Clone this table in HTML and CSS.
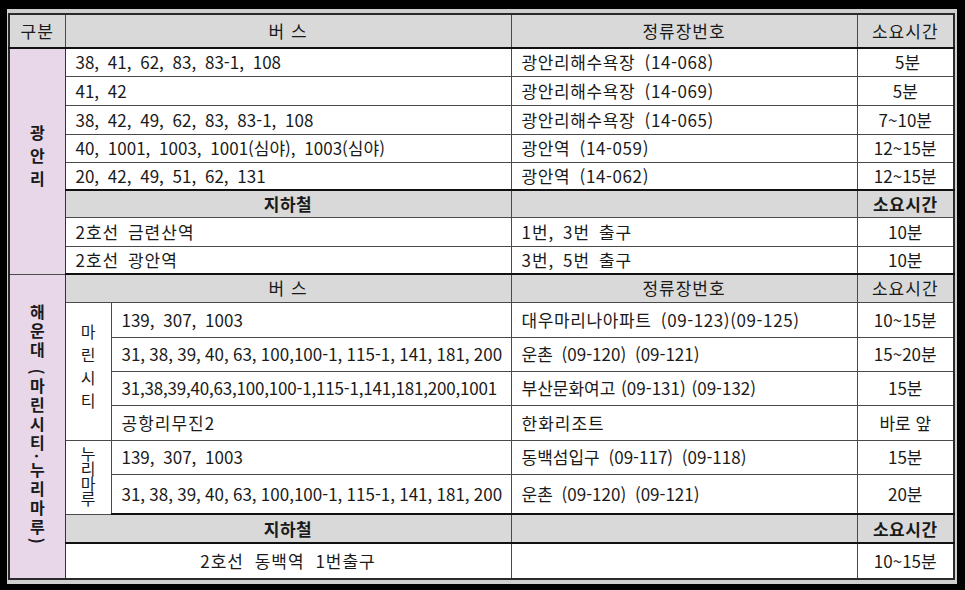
FILE: index.html
```html
<!DOCTYPE html>
<html lang="ko">
<head>
<meta charset="utf-8">
<title>교통편 안내</title>
<link rel="stylesheet" href="styles.css">
</head>
<body>
<div class="frame">
<table class="route">
  <colgroup>
    <col class="c-region">
    <col class="c-sub">
    <col class="c-bus">
    <col class="c-stop">
    <col class="c-time">
  </colgroup>
  <thead>
    <tr class="h-head">
      <th>구분</th>
      <th colspan="2">버 스</th>
      <th>정류장번호</th>
      <th>소요시간</th>
    </tr>
  </thead>
  <tbody>
    <tr class="r28">
      <td rowspan="8" class="region"><span class="vt vt-g">광안리</span></td>
      <td colspan="2" class="txt">38, 41, 62, 83, 83-1, 108</td>
      <td class="txt wide">광안리해수욕장 (14-068)</td>
      <td class="time">&nbsp;5분</td>
    </tr>
    <tr class="r29">
      <td colspan="2" class="txt">41, 42</td>
      <td class="txt wide">광안리해수욕장 (14-069)</td>
      <td class="time">5분</td>
    </tr>
    <tr class="r29">
      <td colspan="2" class="txt">38, 42, 49, 62, 83, 83-1, 108</td>
      <td class="txt wide">광안리해수욕장 (14-065)</td>
      <td class="time">7~10분</td>
    </tr>
    <tr class="r28">
      <td colspan="2" class="txt">40, 1001, 1003, 1001(심야), 1003(심야)</td>
      <td class="txt wide">광안역 (14-059)</td>
      <td class="time">12~15분</td>
    </tr>
    <tr class="r28 thick-b">
      <td colspan="2" class="txt">20, 42, 49, 51, 62, 131</td>
      <td class="txt wide">광안역 (14-062)</td>
      <td class="time">12~15분</td>
    </tr>
    <tr class="sub r27">
      <td colspan="2" class="bold">지하철</td>
      <td></td>
      <td class="bold">소요시간</td>
    </tr>
    <tr class="r29">
      <td colspan="2" class="txt ko">2호선 금련산역</td>
      <td class="txt ko">1번, 3번 출구</td>
      <td class="time">10분</td>
    </tr>
    <tr class="r28 thick-b">
      <td colspan="2" class="txt ko">2호선 광안역</td>
      <td class="txt ko">3번, 5번 출구</td>
      <td class="time">10분</td>
    </tr>

    <tr class="sub r28">
      <td rowspan="9" class="region region-h"><span class="vt vt-h">해운대 (마린시티·누리마루)</span></td>
      <td colspan="2" class="hd">버 스</td>
      <td class="hd">정류장번호</td>
      <td class="hd">소요시간</td>
    </tr>
    <tr class="r35">
      <td rowspan="4" class="area"><span class="vt vt-m">마린시티</span></td>
      <td class="txt">139, 307, 1003</td>
      <td class="txt wide">대우마리나아파트 (09-123)(09-125)</td>
      <td class="time">10~15분</td>
    </tr>
    <tr class="r34">
      <td class="txt long">31, 38, 39, 40, 63, 100,100-1, 115-1, 141, 181, 200</td>
      <td class="txt">운촌 (09-120) (09-121)</td>
      <td class="time">15~20분</td>
    </tr>
    <tr class="r34">
      <td class="txt tight">31,38,39,40,63,100,100-1,115-1,141,181,200,1001</td>
      <td class="txt narrow">부산문화여고 (09-131) (09-132)</td>
      <td class="time">15분</td>
    </tr>
    <tr class="r35">
      <td class="txt ko">공항리무진2</td>
      <td class="txt ko">한화리조트</td>
      <td class="time">바로 앞</td>
    </tr>
    <tr class="r34">
      <td rowspan="2" class="area"><span class="vt vt-n">누리마루</span></td>
      <td class="txt">139, 307, 1003</td>
      <td class="txt">동백섬입구 (09-117) (09-118)</td>
      <td class="time">15분</td>
    </tr>
    <tr class="r40 thick-b">
      <td class="txt long">31, 38, 39, 40, 63, 100,100-1, 115-1, 141, 181, 200</td>
      <td class="txt">운촌 (09-120) (09-121)</td>
      <td class="time">20분</td>
    </tr>
    <tr class="sub r29 thick-b">
      <td colspan="2" class="bold">지하철</td>
      <td></td>
      <td class="bold">소요시간</td>
    </tr>
    <tr class="r36">
      <td colspan="2" class="center">2호선 동백역 1번출구</td>
      <td></td>
      <td class="time">10~15분</td>
    </tr>
  </tbody>
</table>
</div>
</body>
</html>
```

FILE: styles.css
```css
html, body {
  margin: 0;
  padding: 0;
  background: #000;
}

body {
  width: 965px;
  height: 590px;
  overflow: hidden;
  font-family: "Noto Sans CJK KR", "Noto Sans", sans-serif;
  font-size: 17px;
  color: #1a1a1a;
}

.frame {
  margin: 9px 8px 0 7px;
  padding: 4px 4px 4px 1px;
  background: #cfcfcf;
  width: 945px;
}

.route {
  width: 945px;
  table-layout: fixed;
  border-collapse: collapse;
  background: #fff;
  line-height: 1.15;
  border: 2px solid #2a2a2a;
}

.c-region { width: 56px; }
.c-sub { width: 46px; }
.c-bus { width: 400px; }
.c-stop { width: 346px; }
.c-time { width: 97px; }

.route th,
.route td {
  border: 1px solid #4a4a4a;
  padding: 0;
  vertical-align: middle;
  text-align: center;
  white-space: nowrap;
  overflow: hidden;
}

.route th {
  font-weight: normal;
  background: #d9d9d9;
  letter-spacing: 1px;
}

.hd { letter-spacing: 1px; }

.h-head { height: 34px; }
.h-head th { border-bottom: 2px solid #111; }

.r27 { height: 27px; }
.r28 { height: 28px; }
.r29 { height: 29px; }
.r34 { height: 34px; }
.r35 { height: 35px; }
.r36 { height: 36px; }
.r40 { height: 40px; }

.thick-b td { border-bottom: 2px solid #111; }

.sub td { background: #d9d9d9; }
.sub td.region { background: #e7d7e9; }

.bold { font-weight: bold; letter-spacing: 0.5px; }

.txt {
  text-align: left !important;
  padding-left: 10px !important;
  word-spacing: 4px;
}

.txt.long { word-spacing: -0.5px; }
.txt.tight { word-spacing: 0; letter-spacing: -0.2px; }
.txt.wide { letter-spacing: 0.6px; }
.txt.narrow { word-spacing: 1px; }
.txt.ko { letter-spacing: 1px; word-spacing: 3px; }

.center { letter-spacing: 1px; word-spacing: 5px; }

.time { text-align: center; }

.region {
  background: #e7d7e9;
  border-right: 1.5px solid #333 !important;
}

.region.region-h { border-bottom: 0 !important; }

.vt {
  display: inline-block;
  writing-mode: vertical-rl;
  text-orientation: mixed;
  line-height: 1;
  font-size: 16px;
  font-weight: bold;
}

.vt-g { letter-spacing: 7px; }
.vt-h { letter-spacing: 3px; }
.vt-m { letter-spacing: 7px; font-weight: normal; }
.vt-n { letter-spacing: -1px; font-weight: normal; }

.area { background: #fff; }
```
